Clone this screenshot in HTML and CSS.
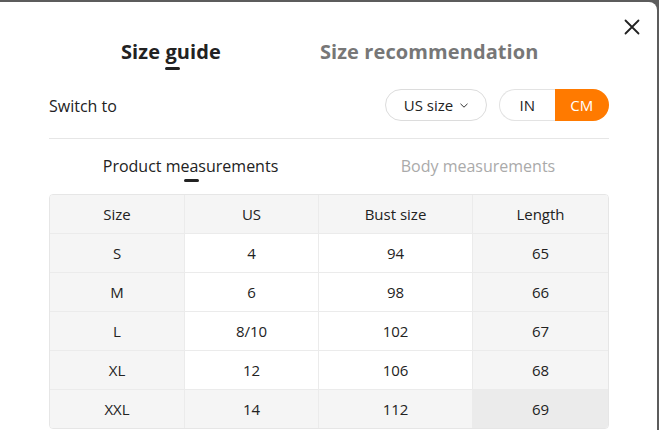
FILE: index.html
```html
<!DOCTYPE html>
<html>
<head>
<meta charset="utf-8">
<link rel="stylesheet" href="styles.css">
</head>
<body>
<div class="modal">
  <button class="close" aria-label="Close">
    <svg width="16" height="16" viewBox="0 0 16 16"><path d="M1.5 1.5L14.5 14.5M14.5 1.5L1.5 14.5" stroke="#222" stroke-width="1.8" stroke-linecap="round"/></svg>
  </button>
  <div class="tabs">
    <div class="tab active">Size guide</div>
    <div class="tab">Size recommendation</div>
  </div>
  <div class="switch-row">
    <div class="switch-label">Switch to</div>
    <div class="controls">
      <div class="pill">US size
        <svg width="8" height="5" viewBox="0 0 8 5"><path d="M0.5 0.8L4 4.2L7.5 0.8" fill="none" stroke="#333" stroke-width="1"/></svg>
      </div>
      <div class="units">
        <span class="unit">IN</span>
        <span class="unit on">CM</span>
      </div>
    </div>
  </div>
  <div class="subtabs">
    <div class="subtab active"><span class="label">Product measurements</span></div>
    <div class="subtab second"><span class="label">Body measurements</span></div>
  </div>
  <div class="table">
    <div class="row head">
      <div class="cell">Size</div><div class="cell">US</div><div class="cell">Bust size</div><div class="cell">Length</div>
    </div>
    <div class="row"><div class="cell">S</div><div class="cell">4</div><div class="cell">94</div><div class="cell">65</div></div>
    <div class="row"><div class="cell">M</div><div class="cell">6</div><div class="cell">98</div><div class="cell">66</div></div>
    <div class="row"><div class="cell">L</div><div class="cell">8/10</div><div class="cell">102</div><div class="cell">67</div></div>
    <div class="row"><div class="cell">XL</div><div class="cell">12</div><div class="cell">106</div><div class="cell">68</div></div>
    <div class="row hover"><div class="cell">XXL</div><div class="cell">14</div><div class="cell">112</div><div class="cell hot">69</div></div>
  </div>
</div>
</body>
</html>
```
FILE: styles.css
```css
html, body {
  margin: 0;
  padding: 0;
}
body {
  background: #5c5c5c;
  font-family: "Open Sans", "Noto Sans", sans-serif;
  color: #222;
  overflow: hidden;
}
.modal {
  position: relative;
  margin: 2px 0 0 -8px;
  width: 665px;
  height: 440px;
  background: #fff;
  border-radius: 8px 8px 0 0;
  padding: 0 0 0 57px;
  box-sizing: border-box;
}
.close {
  position: absolute;
  top: 17px;
  right: 17px;
  border: 0;
  background: none;
  padding: 0;
  width: 16px;
  height: 16px;
  display: flex;
}
.tabs {
  display: flex;
  gap: 99px;
  padding: 36px 0 0 72px;
  height: 34px;
}
.tab {
  position: relative;
  font-size: 20px;
  font-weight: 700;
  line-height: 28px;
  color: #777;
  height: 34px;
  letter-spacing: 0.1px;
}
.tab.active {
  color: #222;
}
.tab.active::after {
  content: "";
  position: absolute;
  left: 44px;
  top: 29px;
  width: 15px;
  height: 3px;
  border-radius: 2px;
  background: #222;
}
.switch-row {
  display: flex;
  align-items: center;
  justify-content: space-between;
  width: 560px;
  height: 32px;
  margin-top: 17px;
  padding-bottom: 17px;
  border-bottom: 1px solid #e6e6e6;
}
.switch-label {
  font-size: 16px;
  padding-top: 1px;
}
.controls {
  display: flex;
  gap: 12px;
  align-items: center;
}
.pill {
  box-sizing: border-box;
  width: 102px;
  height: 32px;
  border: 1px solid #dcdcdc;
  border-radius: 16px;
  display: flex;
  align-items: center;
  justify-content: center;
  gap: 7px;
  font-size: 15px;
}
.units {
  display: flex;
  width: 110px;
  height: 32px;
}
.unit {
  flex: 1;
  display: flex;
  align-items: center;
  justify-content: center;
  font-size: 15px;
  box-sizing: border-box;
  border: 1px solid #e3e3e3;
  border-right: 0;
  border-radius: 16px 0 0 16px;
}
.unit.on {
  background: #ff7a00;
  color: #fff;
  border: 0;
  border-radius: 0 16px 16px 0;
}
.subtabs {
  display: flex;
  width: 560px;
  height: 55px;
}
.subtab {
  flex: 0 0 280px;
  box-sizing: border-box;
  text-align: center;
  font-size: 16px;
  line-height: 22px;
  padding-top: 16px;
  color: #aaa;
}
.subtab.active {
  color: #222;
  padding-left: 3px;
}
.subtab.second {
  padding-left: 18px;
}
.label {
  position: relative;
  display: inline-block;
}
.subtab.active .label::after {
  content: "";
  position: absolute;
  left: 81px;
  top: 24px;
  width: 15px;
  height: 3px;
  border-radius: 2px;
  background: #222;
}
.table {
  width: 560px;
  border: 1px solid #e6e6e6;
  border-radius: 4px;
  overflow: hidden;
  box-sizing: border-box;
}
.row {
  display: grid;
  grid-template-columns: 134px 134px 154px 1fr;
  height: 39px;
  border-top: 1px solid #ebebeb;
  box-sizing: border-box;
}
.row.head {
  border-top: 0;
  height: 38px;
  background: #f5f5f5;
}
.cell {
  display: flex;
  align-items: center;
  justify-content: center;
  font-size: 15px;
  color: #222;
  border-left: 1px solid #ebebeb;
}
.cell:first-child {
  border-left: 0;
  background: #f5f5f5;
}
.cell:last-child {
  background: #f5f5f5;
}
.row.hover .cell {
  background: #f5f5f5;
}
.row.hover .cell.hot {
  background: #ebebeb;
}
```
